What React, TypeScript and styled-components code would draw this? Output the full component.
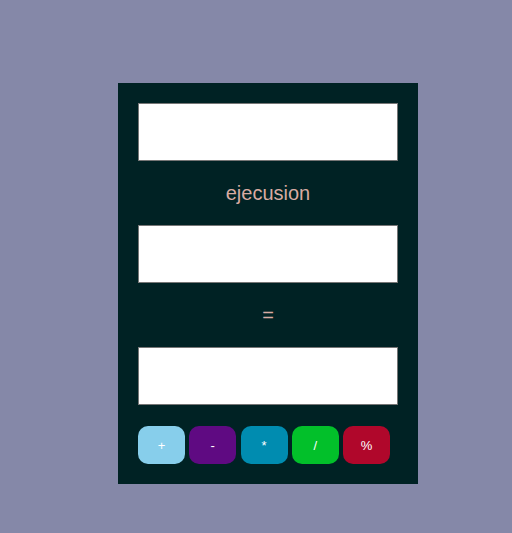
import React from "react";
import styled, { createGlobalStyle } from "styled-components";

const Global = createGlobalStyle`
  html, body { margin: 0; padding: 0; }
  body {
    background: #8588a8;
    font-family: "Liberation Sans", Arial, sans-serif;
    min-height: 533px;
  }
`;

const Page = styled.div`
  padding: 83px 0 0 118px;
`;

const Panel = styled.div`
  width: 300px;
  box-sizing: border-box;
  background: #002224;
  padding: 20px 20px 20px 20px;
  display: flex;
  flex-direction: column;
`;

const Field = styled.input`
  box-sizing: border-box;
  width: 260px;
  height: 58px;
  margin: 0;
  border: 1px solid #767676;
  background: #fff;
  outline: none;
`;

const Label = styled.div`
  height: 64px;
  display: flex;
  align-items: center;
  justify-content: center;
  color: #d8aba2;
  font-size: 20px;
`;

const Buttons = styled.div`
  display: flex;
  gap: 4.25px;
  margin-top: 21px;
`;

const OpButton = styled.button<{ $bg: string }>`
  width: 47px;
  height: 38px;
  border: none;
  border-radius: 10px;
  background: ${(p) => p.$bg};
  color: #fff;
  font-family: "Liberation Sans", Arial, sans-serif;
  font-size: 13px;
  font-weight: normal;
  padding: 0;
`;

const ops = [
  { s: "+", c: "#87ceeb" },
  { s: "-", c: "#5f0a82" },
  { s: "*", c: "#008cb0" },
  { s: "/", c: "#02c02a" },
  { s: "%", c: "#b0072b" },
];

export default function App() {
  return (
    <>
      <Global />
      <Page>
        <Panel>
          <Field type="text" />
          <Label>ejecusion</Label>
          <Field type="text" />
          <Label>=</Label>
          <Field type="text" />
          <Buttons>
            {ops.map((o) => (
              <OpButton key={o.s} $bg={o.c}>
                {o.s}
              </OpButton>
            ))}
          </Buttons>
        </Panel>
      </Page>
    </>
  );
}
